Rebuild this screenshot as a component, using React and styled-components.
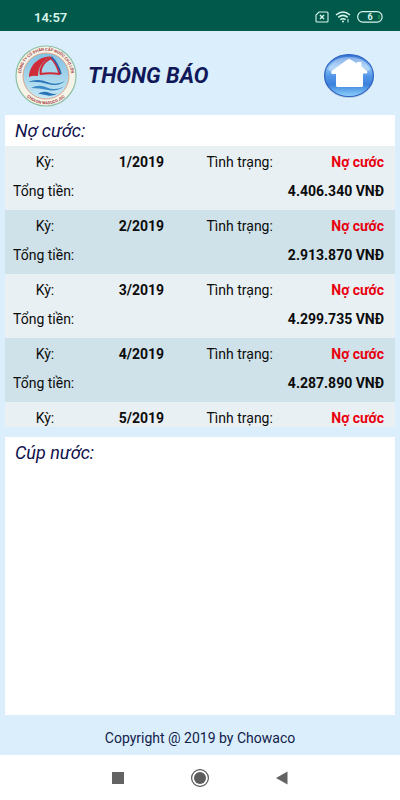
import React from 'react'
import styled, { createGlobalStyle } from 'styled-components'

const GlobalStyle = createGlobalStyle`
    * {
        box-sizing: border-box;
    }
    body {
        margin: 0;
        background: #daeffb;
        font-family: Roboto, "Noto Sans", sans-serif;
        color: #0c0c0c;
    }
`

const StyledPage = styled.div`
    min-height: 100vh;
    display: flex;
    flex-direction: column;
`

const StyledStatusBar = styled.div`
    height: 31px;
    padding: 3px 17px 0 34px;
    display: flex;
    align-items: center;
    justify-content: space-between;
    background: #00594b;
    color: #d8f5ec;
    font-size: 13px;
    font-weight: 600;
`

const StyledStatusIcons = styled.div`
    display: flex;
    align-items: center;
    gap: 6px;
`

const StyledHeader = styled.header`
    height: 84px;
    padding: 5px 25px 0 14px;
    display: flex;
    align-items: center;
`

const StyledTitle = styled.h1`
    flex: 1;
    margin: 0 0 0 10px;
    font-size: 22px;
    font-style: italic;
    font-weight: bold;
    color: #10185a;
`

const StyledHomeButton = styled.button`
    padding: 0;
    border: 0;
    background: none;
    cursor: pointer;

    svg {
        display: block;
    }
`

const StyledMain = styled.main`
    flex: 1;
    padding: 0 5px;
    display: flex;
    flex-direction: column;
    gap: 10px;
`

const StyledSection = styled.section`
    flex: ${props => props.$fill ? 1 : 'none'};
    background: #ffffff;
`

const StyledSectionTitle = styled.h2`
    margin: 0;
    padding: 0 10px;
    font-size: 18px;
    line-height: 31px;
    font-style: italic;
    font-weight: normal;
    color: #10104c;
`

const StyledList = styled.ul`
    height: 281px;
    margin: 0;
    padding: 0;
    overflow: hidden;
    list-style: none;
`

const StyledBill = styled.li`
    padding: 2px 11px 4px 8px;
    font-size: 14px;
    line-height: 29px;

    &:nth-child(odd) {
        background: #e9f0f4;
    }
    &:nth-child(even) {
        background: #cfe2ea;
    }
`

const StyledBillRow = styled.div`
    display: grid;
    grid-template-columns: 64px 7fr 68px 6fr;
    text-align: center;
`

const StyledTotalRow = styled.div`
    display: flex;
    justify-content: space-between;
`

const StyledValue = styled.strong`
    font-weight: bold;
`

const StyledStatus = styled(StyledValue)`
    text-align: right;
    color: #e8000e;
`

const StyledFooter = styled.footer`
    height: 40px;
    padding-top: 5px;
    display: flex;
    align-items: center;
    justify-content: center;
    font-size: 14px;
    color: #14204c;
`

const StyledNavBar = styled.nav`
    height: 45px;
    display: flex;
    align-items: center;
    justify-content: center;
    gap: 62px;
    background: #ffffff;
`

const StyledNavButton = styled.button`
    width: 20px;
    height: 20px;
    padding: 0;
    border: 0;
    background: none;

    svg {
        display: block;
    }
`

const facturas = [
    { ky: '1/2019', tong: '4.406.340 VNĐ' },
    { ky: '2/2019', tong: '2.913.870 VNĐ' },
    { ky: '3/2019', tong: '4.299.735 VNĐ' },
    { ky: '4/2019', tong: '4.287.890 VNĐ' },
    { ky: '5/2019' },
]

const NoSimIcon = () => (
    <svg width="14" height="12" viewBox="0 0 14 12" fill="none" stroke="#d8f5ec" strokeWidth="1.1">
        <path d="M4 1H12Q13 1 13 2V10Q13 11 12 11H2Q1 11 1 10V4Z" />
        <path d="M5 4L9 8M9 4L5 8" strokeWidth="1.4" />
    </svg>
)

const WifiIcon = () => (
    <svg width="16" height="12" viewBox="0 0 16 12" fill="none" stroke="#d8f5ec" strokeWidth="1.5">
        <path d="M1 4Q8 -2 15 4" />
        <path d="M3.2 6.4Q8 2.4 12.8 6.4" />
        <path d="M5.4 8.7Q8 6.6 10.6 8.7" />
        <circle cx="8" cy="10.6" r="1" fill="#d8f5ec" stroke="none" />
        <path d="M13 8V11.5" strokeWidth="1" />
    </svg>
)

const BatteryIcon = () => (
    <svg width="26" height="12" viewBox="0 0 26 12">
        <rect x="0.7" y="0.7" width="24.4" height="10.4" rx="5" fill="none" stroke="#d8f5ec" strokeWidth="1.2" />
        <path d="M22 4V8" stroke="#2fa04c" strokeWidth="1.4" />
        <text x="13" y="9.2" textAnchor="middle" fontSize="9" fontWeight="bold" fill="#d8f5ec">6</text>
    </svg>
)

const Logo = () => (
    <svg width="64" height="62" viewBox="0 0 64 62" role="img" aria-label="Chowaco">
        <defs>
            <linearGradient id="cielo" x1="0" y1="0" x2="0" y2="1">
                <stop offset="0" stopColor="#7fc0e2" />
                <stop offset="1" stopColor="#c9e8f4" />
            </linearGradient>
            <path id="arcoArriba" d="M8.5 40A25.2 25.2 0 1 1 55.5 40" />
            <path id="arcoAbajo" d="M6 42A28.2 28.2 0 0 0 58 42" />
        </defs>
        <circle cx="32" cy="31" r="30" fill="#f6f4e8" stroke="#8fbfa6" strokeWidth="1.2" />
        <circle cx="32" cy="31" r="23" fill="url(#cielo)" stroke="#d9a58c" strokeWidth="1" />
        <path d="M15 32C15 22 23 11 38 11.5C29 15 24 22 24 31Q19 30 15 32Z" fill="#cf2b38" />
        <path d="M37 13C29 17 26 23 26.5 29Q36 27.5 45.5 29Q43 19 37 13Z" fill="#a5d6ed" stroke="#cf2b38" strokeWidth="2" strokeLinejoin="round" />
        <path d="M37.5 12Q44 18 47 29" fill="none" stroke="#2662ad" strokeWidth="1.6" />
        <path d="M14 37Q24 33 33 37T51 36Q44 42 34 39T14 37Z" fill="#2876b9" />
        <path d="M17 43Q25 39 33 42.5T50 41.5Q43 47 34 45T17 43Z" fill="#3d8bc6" />
        <path d="M24 48.5Q30 45.5 36 48T46 47Q40 51.5 34 50.5T24 48.5Z" fill="#2876b9" />
        <g fontSize="4" fontWeight="bold" fill="#a83f45" textAnchor="middle">
            <text><textPath href="#arcoArriba" startOffset="50%">CÔNG TY CỔ PHẦN CẤP NƯỚC CHỢ LỚN</textPath></text>
            <text><textPath href="#arcoAbajo" startOffset="50%">CHOLON WASUCO JSC</textPath></text>
        </g>
    </svg>
)

const HomeIcon = () => (
    <svg width="52" height="46" viewBox="0 0 52 46">
        <defs>
            <linearGradient id="boton" x1="0" y1="0" x2="0" y2="1">
                <stop offset="0" stopColor="#2f6fd3" />
                <stop offset="0.3" stopColor="#8fc4f5" />
                <stop offset="0.52" stopColor="#5295e7" />
                <stop offset="0.72" stopColor="#3c82dd" />
                <stop offset="1" stopColor="#8fd4fb" />
            </linearGradient>
        </defs>
        <ellipse cx="26" cy="23.5" rx="25" ry="21.6" fill="#b7cbe0" />
        <ellipse cx="26" cy="22.5" rx="24.4" ry="21" fill="url(#boton)" stroke="#2c62c4" strokeWidth="1.2" />
        <path d="M5 17Q10 4 26 4T47 17Q38 22 26 22T5 17Z" fill="#ffffff" opacity="0.35" />
        <path d="M24.5 6.5Q26 5.5 27.5 6.5L34 10.5V9H38.5V13.5L44 18Q45 20 43.5 20.5H40V32.5Q40 34 38.5 34H14.5Q13 34 13 32.5V21H9Q7.5 20 8.5 18Z" fill="#ffffff" />
    </svg>
)

const App = () => {
    return (
        <>
            <GlobalStyle />
            <StyledPage>
                <StyledStatusBar>
                    <span>14:57</span>
                    <StyledStatusIcons>
                        <NoSimIcon />
                        <WifiIcon />
                        <BatteryIcon />
                    </StyledStatusIcons>
                </StyledStatusBar>
                <StyledHeader>
                    <Logo />
                    <StyledTitle>THÔNG BÁO</StyledTitle>
                    <StyledHomeButton type="button" aria-label="Trang chủ"><HomeIcon /></StyledHomeButton>
                </StyledHeader>
                <StyledMain>
                    <StyledSection>
                        <StyledSectionTitle>Nợ cước:</StyledSectionTitle>
                        <StyledList>
                            {facturas.map(({ ky, tong }) => (
                                <StyledBill key={ky}>
                                    <StyledBillRow>
                                        <span>Kỳ:</span>
                                        <StyledValue>{ky}</StyledValue>
                                        <span>Tình trạng:</span>
                                        <StyledStatus>Nợ cước</StyledStatus>
                                    </StyledBillRow>
                                    {tong && (
                                        <StyledTotalRow>
                                            <span>Tổng tiền:</span>
                                            <StyledValue>{tong}</StyledValue>
                                        </StyledTotalRow>
                                    )}
                                </StyledBill>
                            ))}
                        </StyledList>
                    </StyledSection>
                    <StyledSection $fill>
                        <StyledSectionTitle>Cúp nước:</StyledSectionTitle>
                    </StyledSection>
                </StyledMain>
                <StyledFooter>Copyright @ 2019 by Chowaco</StyledFooter>
                <StyledNavBar>
                    <StyledNavButton type="button" aria-label="Recientes">
                        <svg width="20" height="20" viewBox="0 0 20 20"><rect x="4" y="4" width="12" height="12" fill="#636363" /></svg>
                    </StyledNavButton>
                    <StyledNavButton type="button" aria-label="Inicio">
                        <svg width="20" height="20" viewBox="0 0 20 20">
                            <circle cx="10" cy="10" r="8.4" fill="none" stroke="#555555" strokeWidth="1.2" />
                            <circle cx="10" cy="10" r="6" fill="#5c5c5c" />
                        </svg>
                    </StyledNavButton>
                    <StyledNavButton type="button" aria-label="Volver">
                        <svg width="20" height="20" viewBox="0 0 20 20"><path d="M15.5 3.5V16.5L4 10Z" fill="#636363" /></svg>
                    </StyledNavButton>
                </StyledNavBar>
            </StyledPage>
        </>
    )
}

export default App
